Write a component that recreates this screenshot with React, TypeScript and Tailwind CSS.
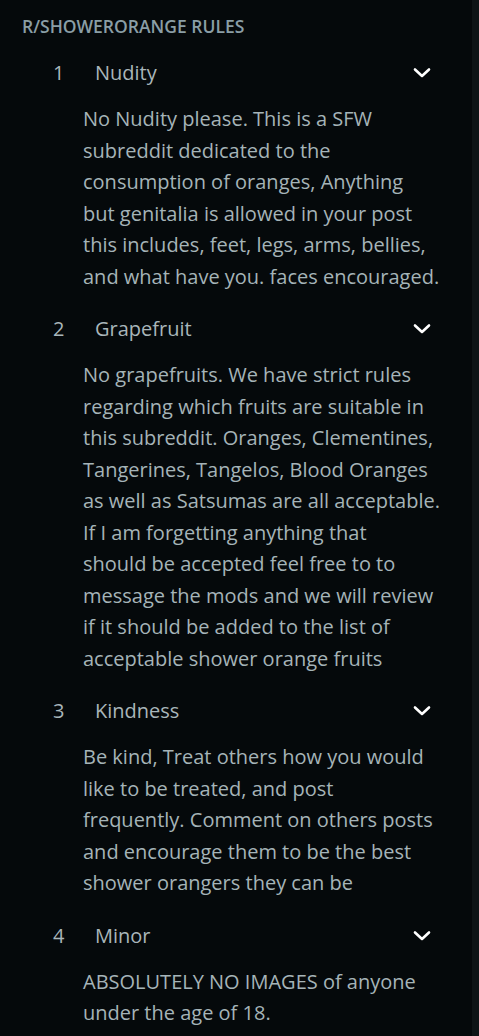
const rules = [
  {
    n: 1,
    title: "Nudity",
    lines: [
      "No Nudity please. This is a SFW",
      "subreddit dedicated to the",
      "consumption of oranges, Anything",
      "but genitalia is allowed in your post",
      "this includes, feet, legs, arms, bellies,",
      "and what have you. faces encouraged.",
    ],
  },
  {
    n: 2,
    title: "Grapefruit",
    lines: [
      "No grapefruits. We have strict rules",
      "regarding which fruits are suitable in",
      "this subreddit. Oranges, Clementines,",
      "Tangerines, Tangelos, Blood Oranges",
      "as well as Satsumas are all acceptable.",
      "If I am forgetting anything that",
      "should be accepted feel free to to",
      "message the mods and we will review",
      "if it should be added to the list of",
      "acceptable shower orange fruits",
    ],
  },
  {
    n: 3,
    title: "Kindness",
    lines: [
      "Be kind, Treat others how you would",
      "like to be treated, and post",
      "frequently. Comment on others posts",
      "and encourage them to be the best",
      "shower orangers they can be",
    ],
  },
  {
    n: 4,
    title: "Minor",
    lines: ["ABSOLUTELY NO IMAGES of anyone", "under the age of 18."],
  },
];

function Chevron() {
  return (
    <svg width="20" height="20" viewBox="0 0 20 20" fill="none" className="shrink-0">
      <polyline
        points="3,6.5 10,13 17,6.5"
        stroke="#ffffff"
        strokeWidth="2.6"
        strokeLinecap="round"
        strokeLinejoin="round"
      />
    </svg>
  );
}

export default function App() {
  return (
    <div className="flex min-h-[1036px] w-full bg-[#05090b] font-['Open_Sans',sans-serif]">
      <div className="flex-1 pt-[15px] pl-[22px]">
        <h2 className="h-[22px] text-[17.5px] leading-[22px] font-semibold uppercase text-[#8a9ea6]">
          r/showerorange rules
        </h2>
        <ol className="mt-[16px] flex flex-col">
          {rules.map((r) => (
            <li key={r.n} className="pb-[17px]">
              <div className="flex h-[40px] items-center pr-[40px]">
                <span className="w-[42px] pl-[31px] box-content text-[20px] text-[#a9b6ba]">
                  {r.n}
                </span>
                <span className="flex-1 text-[20px] text-[#a9b6ba]">{r.title}</span>
                <Chevron />
              </div>
              <p className="mt-[10px] ml-[61px] whitespace-nowrap text-[20px] leading-[31.5px] text-[#a5b4b8]">
                {r.lines.map((line, i) => (
                  <span key={i} className="block">
                    {line}
                  </span>
                ))}
              </p>
            </li>
          ))}
        </ol>
      </div>
      <div className="w-[7px] bg-[#0e1416]" />
    </div>
  );
}
